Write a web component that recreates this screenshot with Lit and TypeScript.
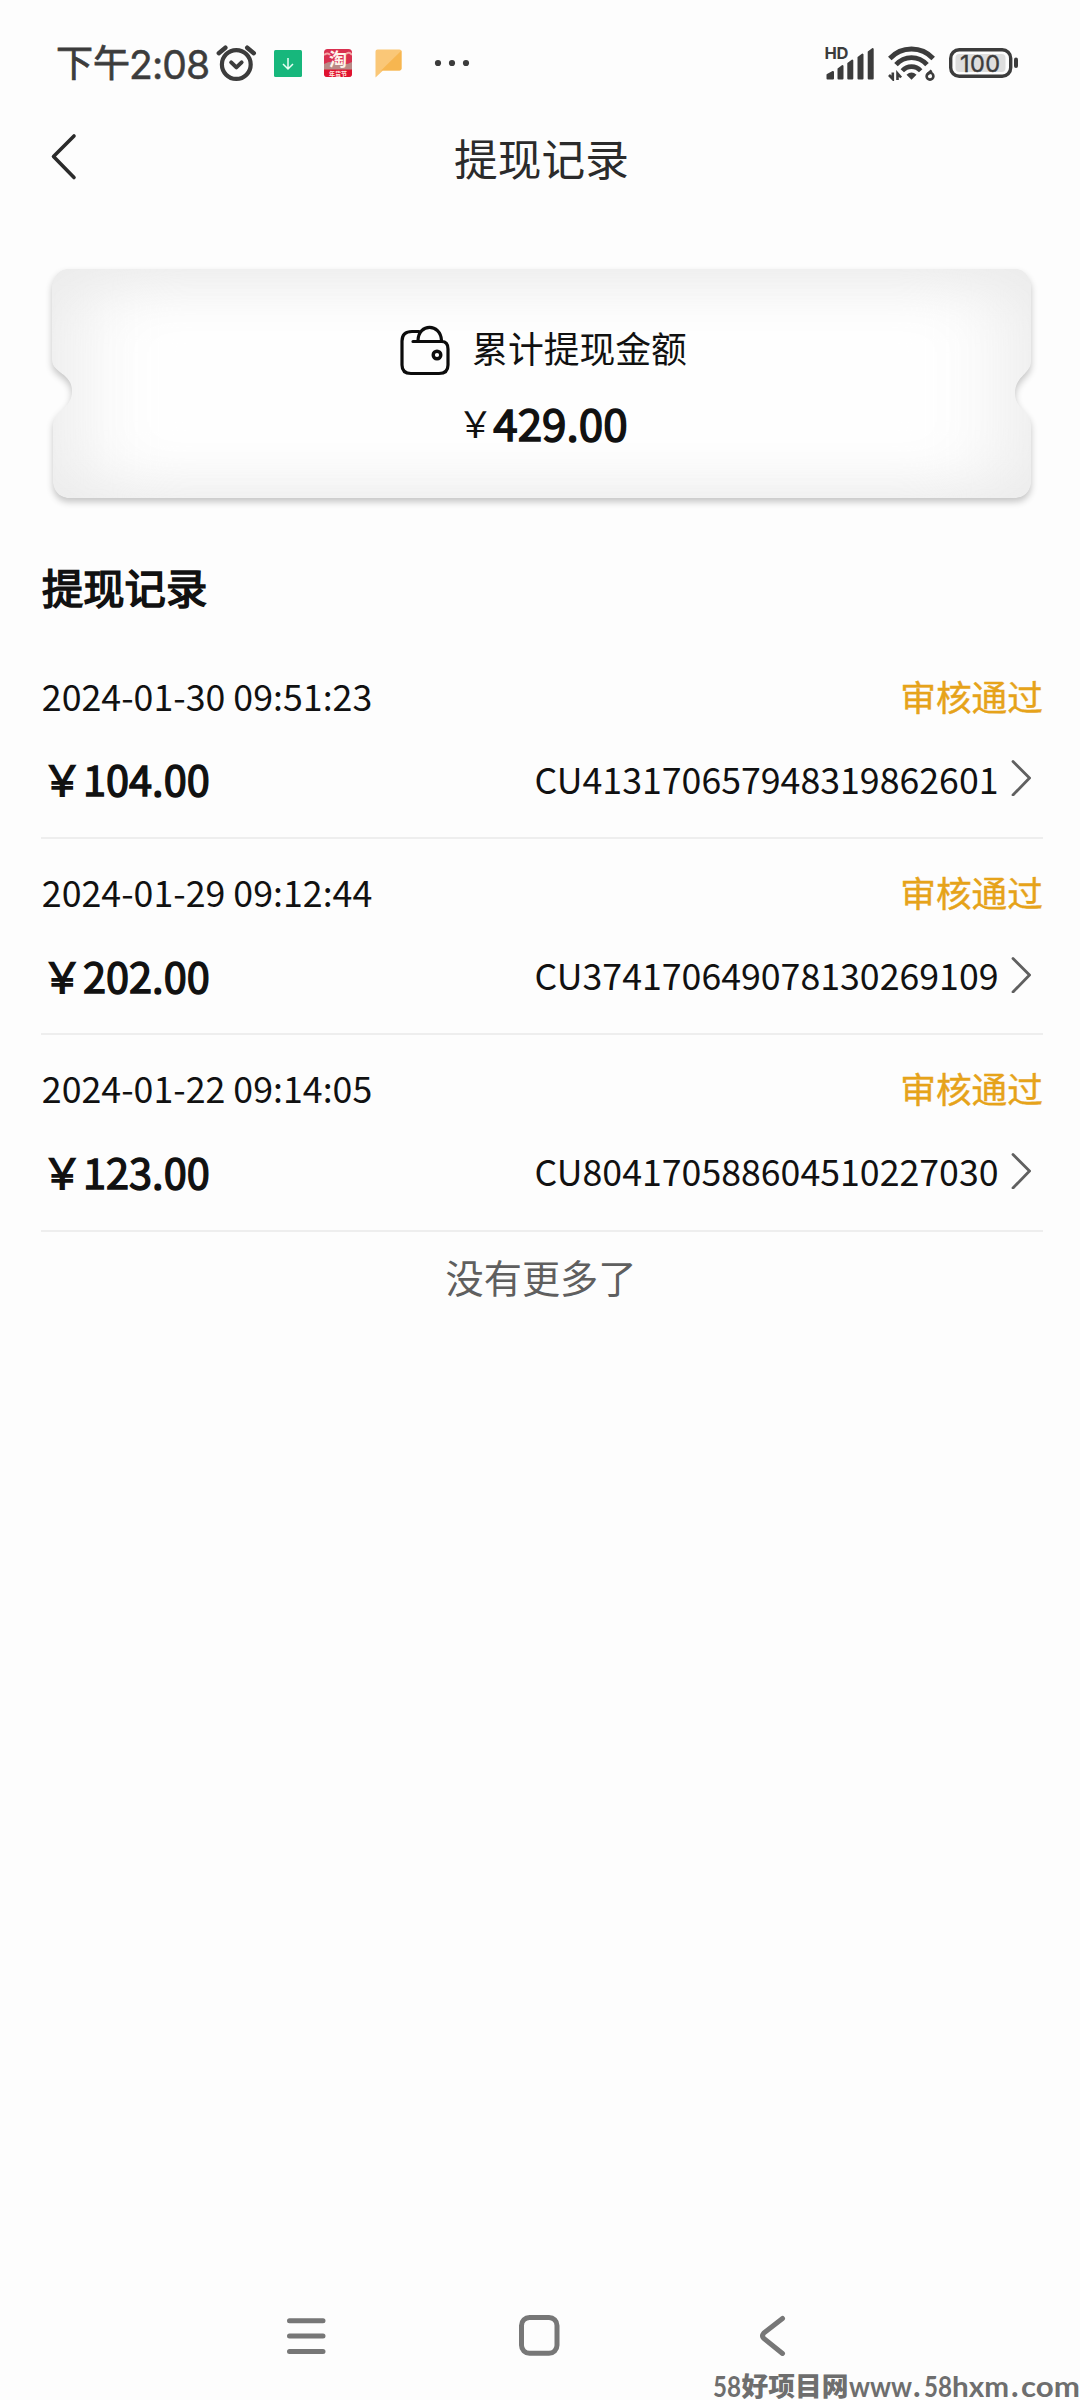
import { LitElement, html, css, svg } from "lit";
import { customElement, property } from "lit/decorators.js";

interface Withdrawal {
  time: string;
  status: string;
  amount: string;
  serial: string;
}

const RECORDS: Withdrawal[] = [
  { time: "2024-01-30 09:51:23", status: "审核通过", amount: "104.00", serial: "CU413170657948319862601" },
  { time: "2024-01-29 09:12:44", status: "审核通过", amount: "202.00", serial: "CU374170649078130269109" },
  { time: "2024-01-22 09:14:05", status: "审核通过", amount: "123.00", serial: "CU804170588604510227030" },
];

@customElement("status-bar")
class StatusBar extends LitElement {
  static styles = css`
    :host {
      display: flex;
      align-items: center;
      justify-content: space-between;
      height: 126px;
      padding: 0 61px 0 56px;
      box-sizing: border-box;
      color: #3c3c3c;
    }
    svg { display: block; }
    .side { display: flex; align-items: center; }
    .clock { display: flex; align-items: center; height: 60px; width: 160px; white-space: nowrap; }
    .half { font-size: 37px; line-height: 60px; -webkit-text-stroke: 0.8px #3c3c3c; margin-top: -4px; }
    .digits { font: 400 39px/60px Inter, "Noto Sans", sans-serif; letter-spacing: -0.9px; margin: 3px 0 0 -1px; -webkit-text-stroke: 0.5px #3c3c3c; }
    .download { margin-left: 17px; }
    .shop { margin-left: 22px; }
    .note { margin-left: 23px; }
    .dots { margin-left: 32px; }
    .wifi { margin-left: 12px; }
    .battery { margin-left: 14px; }
  `;

  render() {
    return html`
      <div class="side">
        <div class="clock"><span class="half">下午</span><span class="digits">2:08</span></div>
        <svg width="41" height="38" viewBox="0 0 41 38" fill="none" stroke="#3c3c3c" stroke-linecap="round">
          <circle cx="20.3" cy="20.5" r="14.4" stroke-width="4.2" />
          <path d="M2.8 9.2 9.4 3.7M37.8 9.2 31.2 3.7" stroke-width="4.4" />
          <path d="m15.2 18.4 5.2 5 5.2-5" stroke-width="4" stroke-linejoin="round" />
        </svg>
        <svg class="download" width="28" height="27" viewBox="0 0 28 27">
          <rect width="28" height="27" rx="1.5" fill="#17b77c" />
          <path d="M14 8v11M9 14l5 5 5-5" fill="none" stroke="#e8fff5" stroke-width="1.5" />
        </svg>
        <svg class="shop" width="28" height="28" viewBox="0 0 28 28">
          <rect width="28" height="28" rx="3.5" fill="#d9304f" />
          <path d="M0 15q7-4 14-1t14-1v9H0z" fill="#b98a86" />
          <path d="M0 20.5h28V24.500a3.500 3.500 0 0 1-3.500 3.500h-21A3.500 3.500 0 0 1 0 24.500z" fill="#e0122f" />
          <path d="M0 6q4-3 6 0M22 5q3-3 6 1" stroke="#f3a6a6" stroke-width="2" fill="none" />
          <text x="14" y="17" text-anchor="middle" font-size="18" font-weight="700" fill="#fff3ea">淘</text>
          <text x="14" y="26.500" text-anchor="middle" font-size="6" font-weight="700" fill="#ffe9e0">年货节</text>
        </svg>
        <svg class="note" width="27" height="30" viewBox="0 0 27 30">
          <path d="M2.500 1.500h22a2 2 0 0 1 2 2v17a2 2 0 0 1-2 2H8L.500 29.500v-26a2 2 0 0 1 2-2z" fill="#fac777" />
          <path d="M26.500 2.500v18a2 2 0 0 1-2 2H6z" fill="#f7b650" />
        </svg>
        <svg class="dots" width="36" height="8" viewBox="0 0 36 8" fill="#3c3c3c">
          <circle cx="4" cy="4" r="3.100" /><circle cx="18" cy="4" r="3.100" /><circle cx="32" cy="4" r="3.100" />
        </svg>
      </div>
      <div class="side">
        <svg width="51" height="34" viewBox="0 0 51 34" fill="#3c3c3c">
          <text x="-.500" y="13" font-family="Inter, sans-serif" font-weight="700" font-size="16.500" textLength="24">HD</text>
          <g stroke="#3c3c3c" stroke-width="2" stroke-linejoin="round">
            <path d="M2.500 32.500v-3.500l5.500-3v6.500zM13.500 32.500v-9.500l4-3v12.500zM23.300 32.500v-15l4-3v18zM33.500 32.500v-21l4-3v24zM43.700 32.500v-26.500l4-3v29.500z" />
          </g>
        </svg>
        <svg class="wifi" width="47" height="35" viewBox="0 0 47 35" fill="none" stroke="#3c3c3c">
          <path d="M1.800 12.500C13.500-.2 33.500-.2 45.200 12.500" stroke-width="4.800" />
          <path d="M8 18.700c8.500-9.500 22.500-9.500 31 0" stroke-width="4.800" />
          <path d="M14.300 24.700c5-5.500 13.400-5.500 18.400 0" stroke-width="4.600" />
          <path d="M18.500 28.800q5-4.500 10 0l-5 5z" fill="#3c3c3c" stroke="none" />
          <path d="M1 29 4.800 33V26.500M9.500 34V27.500l3.600 4" stroke-width="2.600" />
          <path d="M43.500 24.300 39.500 28.500" stroke-width="2.600" />
          <circle cx="42" cy="30.200" r="3.400" stroke-width="2.600" />
        </svg>
        <svg class="battery" width="70" height="30" viewBox="0 0 70 30">
          <rect x="1.700" y="1.700" width="60" height="26.600" rx="8.500" fill="none" stroke="#3c3c3c" stroke-width="3.400" />
          <rect x="6.500" y="6" width="50" height="18" rx="4" fill="#dedede" />
          <rect x="65" y="9.500" width="4" height="10.500" rx="2" fill="#3c3c3c" />
          <text x="31" y="23.500" text-anchor="middle" font-family="Inter, sans-serif" font-size="23.500" fill="#3c3c3c" stroke="#3c3c3c" stroke-width=".4" textLength="40">100</text>
        </svg>
      </div>
    `;
  }
}

@customElement("total-card")
class TotalCard extends LitElement {
  @property() total = "";

  static styles = css`
    :host {
      display: flex;
      flex-direction: column;
      align-items: center;
      position: relative;
      height: 229px;
      margin: 0 48px 0 52px;
      padding-top: 48px;
      box-sizing: border-box;
    }
    .shape { position: absolute; left: -20px; top: -20px; z-index: 0; }
    .line { display: flex; align-items: center; height: 60px; position: relative; z-index: 1; color: #111; }
    .label { font-size: 35.800px; gap: 22px; margin-left: 3px; }
    .sum { margin-top: 15px; font-size: 35.800px; margin-left: 1px; }
    .value { font-size: 44px; -webkit-text-stroke: 1.500px #111; }
    .wallet { display: block; margin-top: 6px; }
  `;

  render() {
    const edge =
      "M14 0H966Q974 1 979 14V93C979 104 963 108 963 124C963 140 979 142 979 156V215Q976 229 962 229H15Q3 227 1 214V156C1 142 20 140 20 122C20 104 0 104 0 91V16Q3 2 14 0Z";
    return html`
      <svg class="shape" width="1020" height="269" viewBox="-20 -20 1020 269">
        <defs>
          <clipPath id="edge"><path d=${edge} /></clipPath>
          <filter id="soft" x="-20%" y="-50%" width="140%" height="200%" color-interpolation-filters="sRGB"><feGaussianBlur stdDeviation="42 26" /></filter>
          <filter id="drop" x="-5%" y="-10%" width="110%" height="125%"><feGaussianBlur stdDeviation="3.500" /></filter>
        </defs>
        <path d=${edge} transform="translate(0 4)" fill="#000" opacity=".22" filter="url(#drop)" />
        <g clip-path="url(#edge)">
          <path d=${edge} fill="#ececec" />
          <rect x="28" y="20" width="924" height="196" rx="24" fill="#fefefe" filter="url(#soft)" />
        </g>
      </svg>
      <div class="line label">
        <svg class="wallet" width="50" height="51" viewBox="0 0 50 51" fill="none" stroke="#0c0c0c" stroke-width="3.200" stroke-linecap="round" stroke-linejoin="round">
          <path d="M19 6.500H12Q2 6.500 2 16V40Q2 48.500 11 48.500H39Q48 48.500 48 40V24Q48 16.500 41.500 16.500H13" />
          <path d="M18 15.500C18.500-2 40.500-2 41.500 15.500" />
          <circle cx="37" cy="30" r="3.800" stroke-width="3.400" />
        </svg>
        <span>累计提现金额</span>
      </div>
      <div class="line sum"><span>￥</span><span class="value">${this.total}</span></div>
    `;
  }
}

@customElement("record-row")
class RecordRow extends LitElement {
  @property({ attribute: false }) record!: Withdrawal;

  static styles = css`
    :host {
      display: grid;
      grid-template-rows: 52px 60px;
      row-gap: 27px;
      padding: 26.700px 0 28.600px 0;
      border-bottom: 2px solid #eeeeee;
      font-size: 35.700px;
      color: #111;
    }
    .line { display: flex; align-items: center; justify-content: space-between; }
    .time { margin-left: 0.800px; letter-spacing: 0.030px; }
    .status { color: #e6a31a; -webkit-text-stroke: 0.400px #e6a31a; }
    .amount { font-size: 41.500px; -webkit-text-stroke: 1.400px #111; margin-left: 0.500px; }
    .serial { display: flex; align-items: center; gap: 12px; padding-right: 12.500px; }
    .chevron { display: block; }
  `;

  render() {
    const r = this.record;
    return html`
      <div class="line"><span class="time">${r.time}</span><span class="status">${r.status}</span></div>
      <div class="line">
        <span class="amount">￥${r.amount}</span>
        <span class="serial">
          <span>${r.serial}</span>
          <svg class="chevron" width="20" height="36" viewBox="0 0 20 36" fill="none" stroke="#606060" stroke-width="2.800" stroke-linecap="round">
            <path d="M2 1.500 18.500 18 2 35" />
          </svg>
        </span>
      </div>
    `;
  }
}

@customElement("nav-bar")
class NavBar extends LitElement {
  static styles = css`
    :host { display: flex; padding-left: 286px; height: 42px; }
    svg { display: block; }
    .home { margin-left: 190px; }
    .return { margin-left: 199px; }
  `;

  render() {
    const stroke = (name: string, d: unknown) => html`
      <svg class=${name} width="42" height="42" viewBox="0 0 42 42" fill="none" stroke="#777" stroke-width="5" stroke-linecap="round" stroke-linejoin="round">${d}</svg>
    `;
    return html`
      ${stroke("recent", svg`<path d="M3.500 6.700H37M3.500 22H37M3.500 37.500H37" />`)}
      ${stroke("home", svg`<rect x="3.500" y="3.500" width="35.500" height="35.800" rx="8" />`)}
      <svg class="return" width="27" height="42" viewBox="0 0 27 42" fill="none" stroke="#777" stroke-width="5" stroke-linecap="round">
        <path d="M23.500 4.500 4.800 19Q2.300 22 4.800 24.500L23.500 39.500" />
      </svg>
    `;
  }
}

@customElement("app-root")
class AppRoot extends LitElement {
  static styles = css`
    :host {
      display: flex;
      flex-direction: column;
      position: relative;
      width: 1080px;
      height: 2400px;
      overflow: hidden;
      background: #fdfdfd;
      font-family: "Noto Sans CJK SC", sans-serif;
    }
    .header {
      display: grid;
      grid-template-columns: 80px 1fr 80px;
      align-items: center;
      height: 62px;
      margin-bottom: 81px;
    }
    .back { display: block; margin-left: 49.500px; }
    .title { text-align: center; font-size: 43.700px; line-height: 62px; color: #2b2b2b; padding-left: 3px; }
    .heading {
      margin: 58.200px 0 26.500px 42px;
      height: 60px;
      line-height: 60px;
      font-size: 41.300px;
      color: #111;
      -webkit-text-stroke: 1.600px #111;
    }
    .list { margin: 0 37px 0 41px; }
    .end { margin-top: 15.600px; height: 60px; line-height: 60px; text-align: center; font-size: 38.200px; color: #5f5f5f; padding-left: 2px; }
    .spacer { flex: 1; }
    .nav { margin-bottom: 17px; }
    .watermark { display: block; align-self: flex-end; font-family: Lato, sans-serif; font-weight: 700; font-size: 28px; fill: #6e6e6e; }
    .cn { font-family: "Noto Sans CJK SC", sans-serif; font-weight: 900; font-size: 26px; }
  `;

  render() {
    return html`
      <status-bar></status-bar>
      <div class="header">
        <svg class="back" width="28" height="48" viewBox="0 0 28 48" fill="none" stroke="#2b2b2b" stroke-width="3.600" stroke-linecap="round" stroke-linejoin="round">
          <path d="M24 3 3.500 23.500 24 44.500" />
        </svg>
        <div class="title">提现记录</div>
      </div>
      <total-card total="429.00"></total-card>
      <div class="heading">提现记录</div>
      <div class="list">${RECORDS.map((r) => html`<record-row .record=${r}></record-row>`)}</div>
      <div class="end">没有更多了</div>
      <div class="spacer"></div>
      <nav-bar class="nav"></nav-bar>
      <svg class="watermark" width="368" height="27" viewBox="712 2373 368 27">
        <text x="713" y="2397" textLength="28" lengthAdjust="spacingAndGlyphs">58</text>
        <text class="cn" x="741.500" y="2396" textLength="107" lengthAdjust="spacingAndGlyphs">好项目网</text>
        <text x="849" y="2397" textLength="63" lengthAdjust="spacingAndGlyphs">www</text>
        <text x="913" y="2397" font-size="32">.</text>
        <text x="924" y="2397" textLength="28" lengthAdjust="spacingAndGlyphs">58</text>
        <text x="952" y="2397" textLength="57" lengthAdjust="spacingAndGlyphs">hxm</text>
        <text x="1011" y="2397" font-size="32">.</text>
        <text x="1021" y="2397" textLength="59" lengthAdjust="spacingAndGlyphs">com</text>
      </svg>
    `;
  }
}
